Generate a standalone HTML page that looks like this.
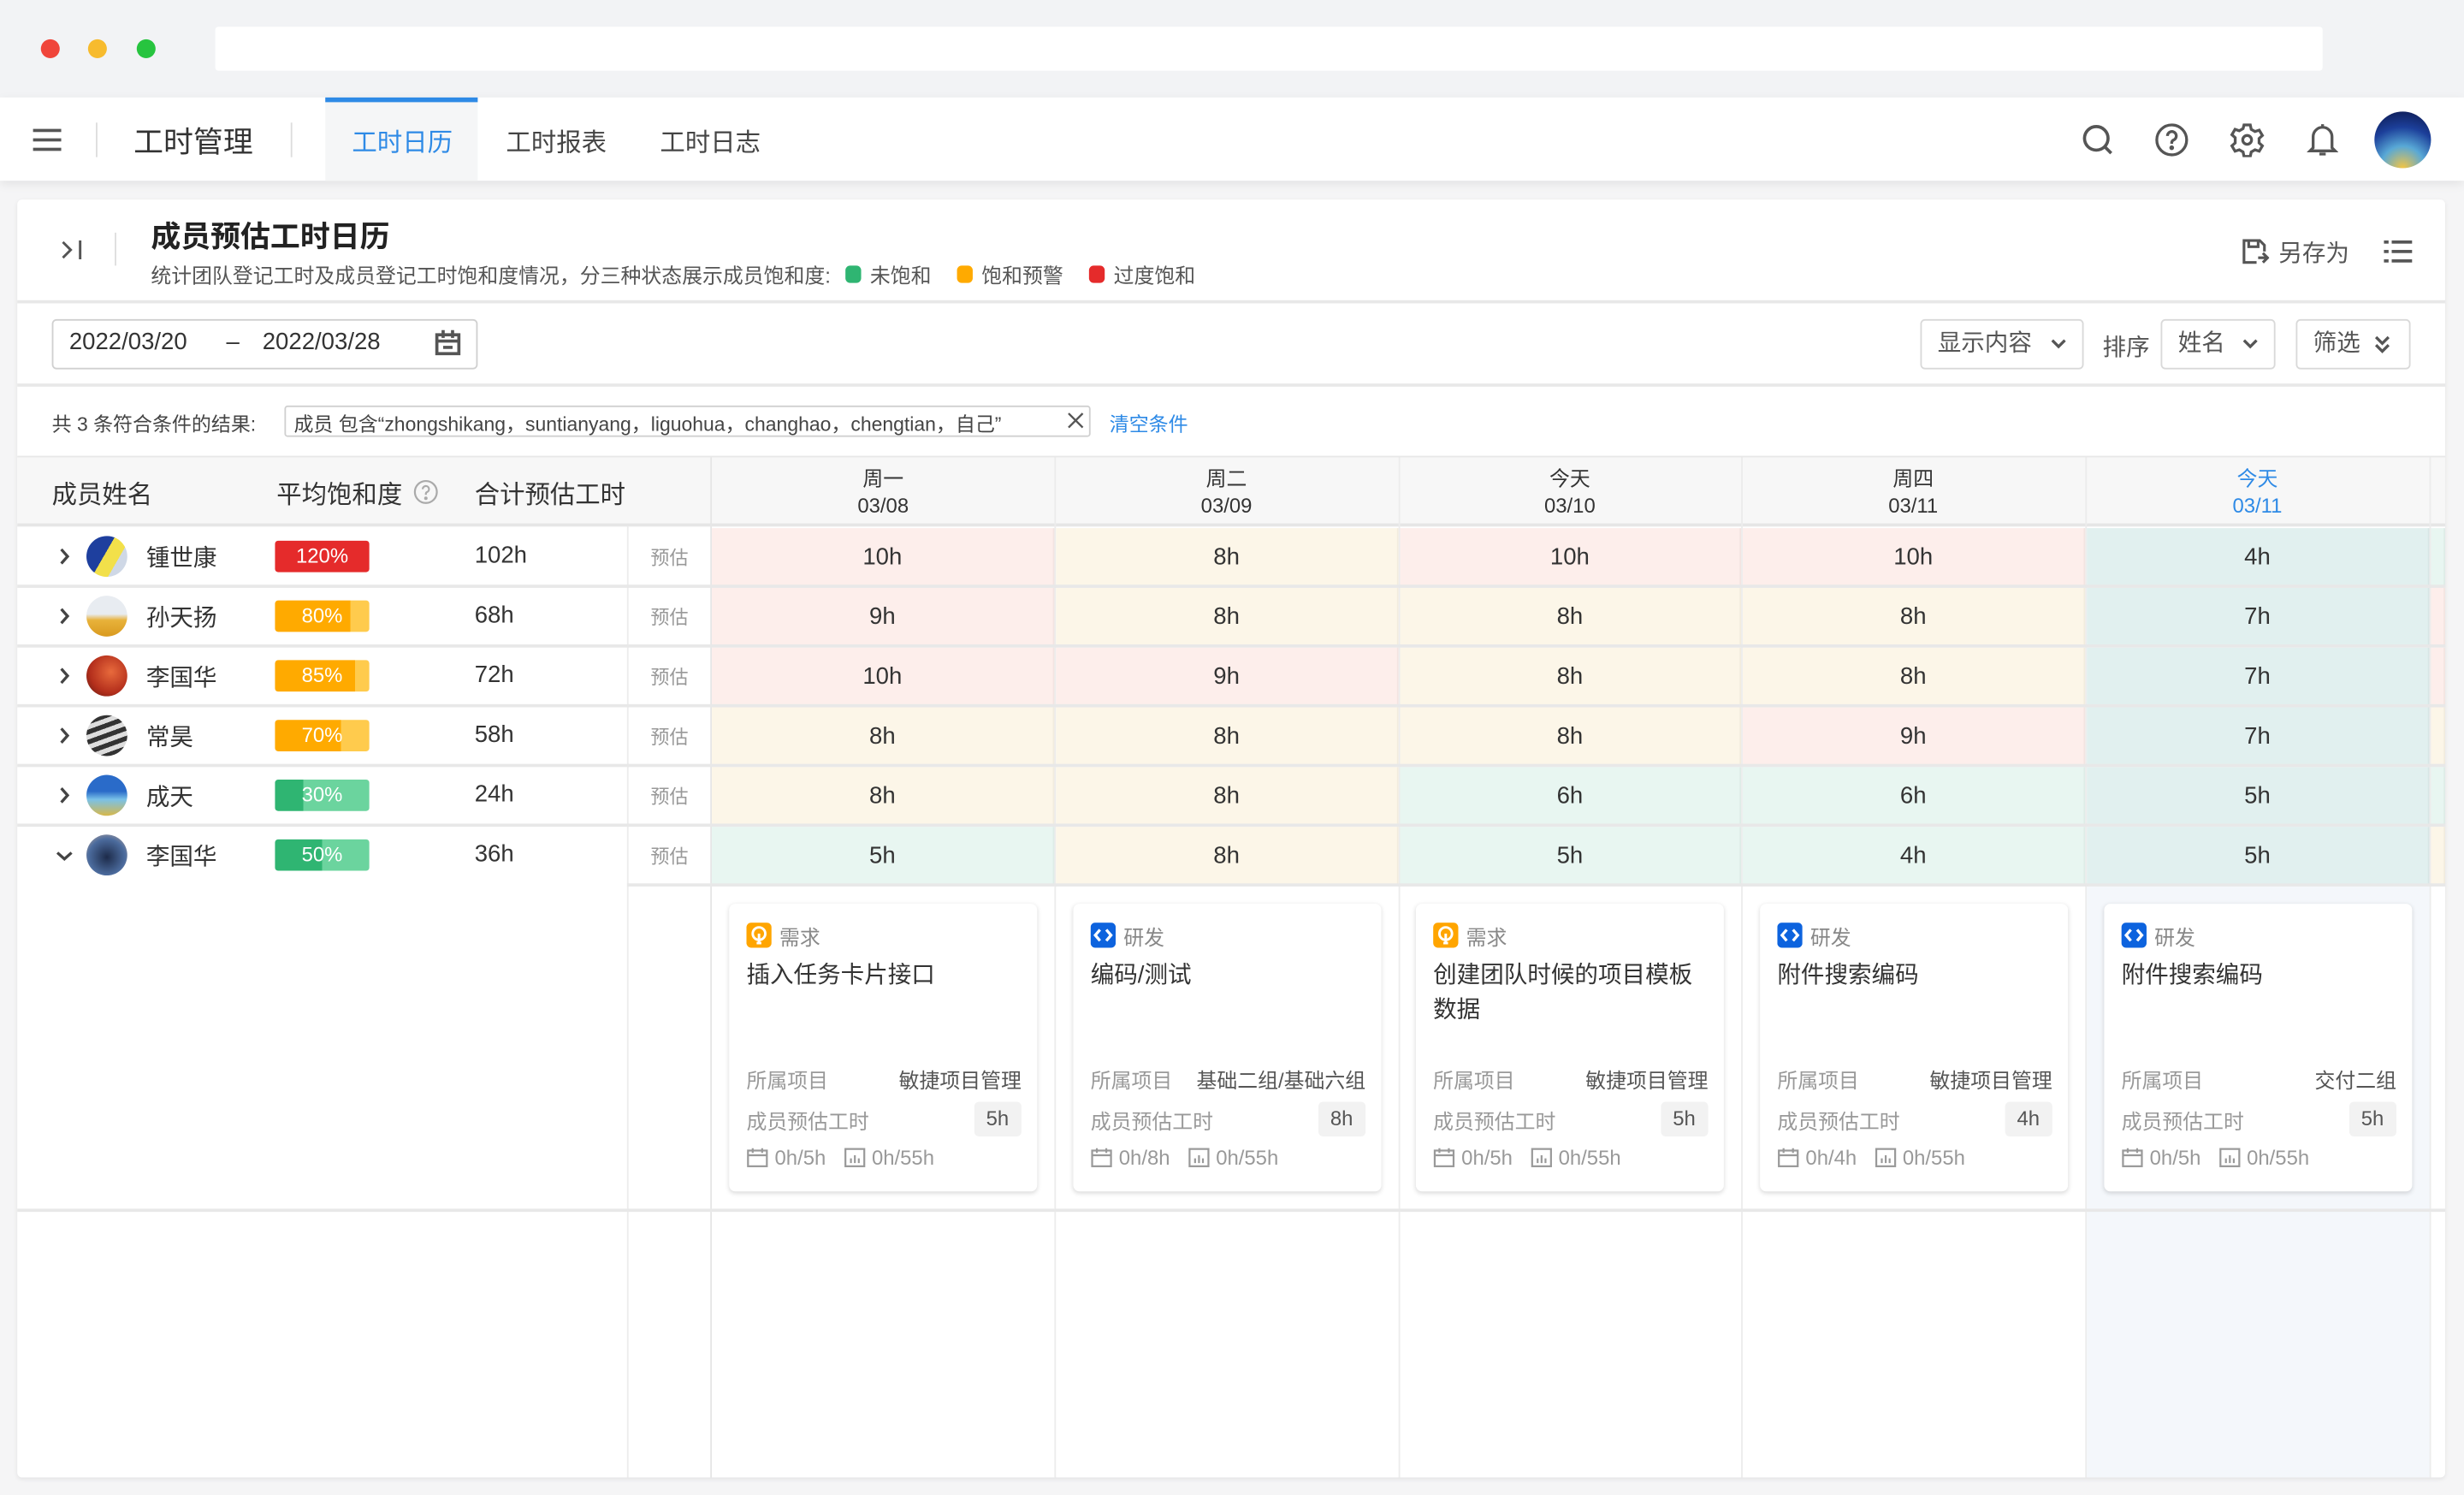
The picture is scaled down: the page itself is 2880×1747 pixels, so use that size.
<!DOCTYPE html>
<html><head><meta charset="utf-8">
<style>
*{margin:0;padding:0;box-sizing:border-box}
html,body{width:2880px;height:1746px;overflow:hidden;background:#f5f5f6}
body{font-family:"Liberation Sans","Noto Sans CJK SC",sans-serif;color:#333}
#w{position:absolute;left:0;top:0;width:1568px;height:951px;transform:scale(1.836735);transform-origin:0 0;background:#f5f5f6}
.a{position:absolute}
.t{position:absolute;white-space:nowrap}
.cell{position:absolute;height:37px;text-align:center;line-height:37px;font-size:15px;color:#333;border-right:1px solid rgba(0,0,0,0.04)}
.R{background:#fdeeeb}.Y{background:#fcf6e8}.G{background:#e8f6f1}.T{background:#e1f0ef}
.hl{position:absolute;height:2px;background:#e8e8e8}
.vl{position:absolute;width:1px;background:#ececec}
.badge{position:absolute;left:175px;width:60px;height:20px;border-radius:2px;color:#fff;font-size:13px;text-align:center;line-height:20px;overflow:hidden}
.av{position:absolute;left:55px;width:26px;height:26px;border-radius:50%}
.card{position:absolute;top:575px;width:196px;height:183px;background:#fff;border-radius:4px;box-shadow:0 1px 3px rgba(0,0,0,0.15)}
.card .ty{position:absolute;left:32px;top:11px;font-size:13px;color:#888}
.card .ti{position:absolute;left:11px;top:35px;width:172px;font-size:15px;line-height:22px;color:#333}
.card .l1{position:absolute;left:11px;top:102px;font-size:13px;color:#999}
.card .r1{position:absolute;right:10px;top:102px;font-size:13px;color:#555}
.card .l2{position:absolute;left:11px;top:128px;font-size:13px;color:#999}
.card .pill{position:absolute;right:10px;top:126px;height:22px;padding:0 8px;background:#f2f2f2;border-radius:3px;font-size:13px;line-height:22px;color:#555}
.card .st{position:absolute;left:11px;top:154px;font-size:13px;color:#999;display:flex;align-items:center;gap:4px;white-space:nowrap}
.ic{width:16px;height:16px;position:absolute;left:11px;top:12px;border-radius:3px}
.btn{position:absolute;top:203px;height:32px;border:1px solid #d9d9d9;border-radius:3px;font-size:15px;color:#555;line-height:30px;padding-left:10px}
.btn svg{position:absolute;top:11px}
.chev{position:absolute;left:37px}
</style></head><body><div id="w">

<div class="a" style="left:0;top:0;width:1568px;height:62px;background:#f2f3f5"></div>
<div class="a" style="left:26px;top:25px;width:12px;height:12px;border-radius:50%;background:#f0453a"></div>
<div class="a" style="left:56px;top:25px;width:12px;height:12px;border-radius:50%;background:#f7bb2e"></div>
<div class="a" style="left:87px;top:25px;width:12px;height:12px;border-radius:50%;background:#27c43f"></div>
<div class="a" style="left:137px;top:17px;width:1341px;height:28px;background:#fff;border-radius:2px"></div>

<div class="a" style="left:0;top:62px;width:1568px;height:53px;background:#fff;box-shadow:0 2px 6px rgba(0,0,0,0.08)"></div>
<svg class="a" style="left:21px;top:81px" width="18" height="16"><rect y="1" width="18" height="2" fill="#555"/><rect y="7" width="18" height="2" fill="#555"/><rect y="13" width="18" height="2" fill="#555"/></svg>
<div class="a" style="left:61px;top:78px;width:1px;height:22px;background:#ddd"></div>
<div class="t" style="left:85px;top:76px;font-size:19px;color:#333">工时管理</div>
<div class="a" style="left:185px;top:78px;width:1px;height:22px;background:#ddd"></div>
<div class="a" style="left:207px;top:62px;width:97px;height:53px;background:#f5f6f7;border-top:3px solid #2e8ae6"></div>
<div class="t" style="left:224px;top:77px;font-size:16px;color:#2e8ae6">工时日历</div>
<div class="t" style="left:322px;top:77px;font-size:16px;color:#444">工时报表</div>
<div class="t" style="left:420px;top:77px;font-size:16px;color:#444">工时日志</div>
<svg class="a" style="left:1324px;top:78px" width="22" height="22" fill="none" stroke="#555" stroke-width="2"><circle cx="10" cy="10" r="7.5"/><path d="M15.5 15.5l4 4"/></svg>
<svg class="a" style="left:1371px;top:78px" width="22" height="22" fill="none" stroke="#555" stroke-width="1.8"><circle cx="11" cy="11" r="9.5"/><path d="M8.3 8.5a2.8 2.8 0 1 1 3.8 2.6c-.8.4-1.1.9-1.1 1.8v.6"/><circle cx="11" cy="16" r=".6" fill="#555"/></svg>
<svg class="a" style="left:1419px;top:78px" width="22" height="22" fill="none" stroke="#555" stroke-width="1.8"><path d="M9 1.5h4l.6 2.8 2.4 1.4 2.7-.9 2 3.4-2.1 1.9v2.8l2.1 1.9-2 3.4-2.7-.9-2.4 1.4-.6 2.8H9l-.6-2.8-2.4-1.4-2.7.9-2-3.4 2.1-1.9V9.6L1.3 7.7l2-3.4 2.7.9 2.4-1.4z"/><circle cx="11" cy="11" r="2.8"/></svg>
<svg class="a" style="left:1468px;top:77px" width="20" height="24" fill="none" stroke="#555" stroke-width="1.8"><path d="M10 2v2M4 17V10a6 6 0 0 1 12 0v7l2 2H2z"/><path d="M8 21h4"/></svg>
<div class="a" style="left:1511px;top:71px;width:36px;height:36px;border-radius:50%;background:radial-gradient(circle at 50% 100%,#f5c542 0%,#58a8d6 35%,#1c3f9a 65%,#0b1546 100%)"></div>

<div class="a" style="left:11px;top:127px;width:1545px;height:813px;background:#fff;border-radius:3px;box-shadow:0 1px 3px rgba(0,0,0,0.08)"></div>
<svg class="a" style="left:38px;top:151px" width="16" height="16" fill="none" stroke="#555" stroke-width="1.6"><path d="M2 3l5 5-5 5M13 2v12"/></svg>
<div class="a" style="left:73px;top:148px;width:1px;height:21px;background:#ddd"></div>
<div class="t" style="left:96px;top:136px;font-size:19px;color:#222;font-weight:bold">成员预估工时日历</div>
<div class="t" style="left:96px;top:165px;font-size:13px;color:#555;display:flex;align-items:center">统计团队登记工时及成员登记工时饱和度情况，分三种状态展示成员饱和度:
<span style="display:inline-block;width:10px;height:11px;border-radius:3px;background:#2fb572;margin:0 6px 0 9px"></span>未饱和
<span style="display:inline-block;width:10px;height:11px;border-radius:3px;background:#ffaa00;margin:0 6px 0 16px"></span>饱和预警
<span style="display:inline-block;width:10px;height:11px;border-radius:3px;background:#e52b2b;margin:0 6px 0 16px"></span>过度饱和</div>
<svg class="a" style="left:1426px;top:151px" width="18" height="18" fill="none" stroke="#555" stroke-width="1.7"><path d="M10 16H2V2h10l3 3v4"/><path d="M5 2v4h6V2M11 13h6M14 10l3 3-3 3"/></svg>
<div class="t" style="left:1450px;top:150px;font-size:15px;color:#555">另存为</div>
<svg class="a" style="left:1517px;top:152px" width="18" height="16" fill="#555"><rect x="0" y="1" width="3" height="2"/><rect x="5" y="1" width="13" height="2"/><rect x="0" y="7" width="3" height="2"/><rect x="5" y="7" width="13" height="2"/><rect x="0" y="13" width="3" height="2"/><rect x="5" y="13" width="13" height="2"/></svg>
<div class="a" style="left:11px;top:191px;width:1545px;height:2px;background:#e8e8e8"></div>

<div class="a" style="left:33px;top:203px;width:271px;height:32px;border:1px solid #d0d0d0;border-radius:3px"></div>
<div class="t" style="left:44px;top:209px;font-size:15px;color:#333">2022/03/20</div>
<div class="t" style="left:144px;top:209px;font-size:15px;color:#333">–</div>
<div class="t" style="left:167px;top:209px;font-size:15px;color:#333">2022/03/28</div>
<svg class="a" style="left:276px;top:209px" width="18" height="18" fill="none" stroke="#555" stroke-width="2"><rect x="2" y="4" width="14" height="12"/><path d="M6 1v5M12 1v5M2 8h14M6 12h6"/></svg>
<div class="btn" style="left:1222px;width:104px">显示内容<svg style="left:82px" width="10" height="8" fill="none" stroke="#555" stroke-width="1.8"><path d="M1 1.5l4 4 4-4"/></svg></div>
<div class="t" style="left:1338px;top:210px;font-size:15px;color:#555">排序</div>
<div class="btn" style="left:1375px;width:73px">姓名<svg style="left:51px" width="10" height="8" fill="none" stroke="#555" stroke-width="1.8"><path d="M1 1.5l4 4 4-4"/></svg></div>
<div class="btn" style="left:1461px;width:73px">筛选<svg style="left:49px;top:9px" width="10" height="12" fill="none" stroke="#555" stroke-width="1.8"><path d="M1 1.5l4 4 4-4M1 6.5l4 4 4-4"/></svg></div>
<div class="a" style="left:11px;top:244px;width:1545px;height:2px;background:#e8e8e8"></div>

<div class="t" style="left:33px;top:259px;font-size:12.5px;color:#444">共 3 条符合条件的结果:</div>
<div class="a" style="left:181px;top:258px;width:513px;height:20px;border:1px solid #d0d0d0;border-radius:2px"></div>
<div class="t" style="left:187px;top:259px;font-size:12.5px;color:#444">成员 包含“zhongshikang，suntianyang，liguohua，changhao，chengtian，自己”</div>
<svg class="a" style="left:679px;top:262px" width="11" height="11" fill="none" stroke="#555" stroke-width="1.3"><path d="M1 1l9 9M10 1l-9 9"/></svg>
<div class="t" style="left:706px;top:259px;font-size:12.5px;color:#2e8ae6">清空条件</div>

<div class="a" style="left:11px;top:290px;width:1545px;height:45px;background:#f7f7f7;border-top:1px solid #e8e8e8;border-bottom:2px solid #e6e6e6"></div>
<div class="t" style="left:33px;top:301px;font-size:16px;color:#333">成员姓名</div>
<div class="t" style="left:176px;top:301px;font-size:16px;color:#333">平均饱和度</div>
<svg class="a" style="left:263px;top:305px" width="16" height="16" fill="none" stroke="#aaa" stroke-width="1.2"><circle cx="8" cy="8" r="7"/><path d="M6 6.2a2 2 0 1 1 2.7 1.9c-.5.2-.7.6-.7 1.2v.5"/><circle cx="8" cy="12" r=".5" fill="#aaa"/></svg>
<div class="t" style="left:302px;top:301px;font-size:16px;color:#333">合计预估工时</div>
<div class="vl" style="left:452px;top:291px;height:649px;background:#e6e6e6"></div>
<div class="vl" style="left:671px;top:291px;height:649px"></div>
<div class="vl" style="left:890px;top:291px;height:649px"></div>
<div class="vl" style="left:1108px;top:291px;height:649px"></div>
<div class="vl" style="left:1327px;top:291px;height:649px"></div>
<div class="vl" style="left:1546px;top:291px;height:649px"></div>
<div class="vl" style="left:399px;top:335px;height:605px"></div>
<div class="t" style="left:453px;width:218px;top:296px;text-align:center;font-size:13px;line-height:17px;color:#333">周一<br>03/08</div>
<div class="t" style="left:671px;width:219px;top:296px;text-align:center;font-size:13px;line-height:17px;color:#333">周二<br>03/09</div>
<div class="t" style="left:890px;width:218px;top:296px;text-align:center;font-size:13px;line-height:17px;color:#333">今天<br>03/10</div>
<div class="t" style="left:1108px;width:219px;top:296px;text-align:center;font-size:13px;line-height:17px;color:#333">周四<br>03/11</div>
<div class="t" style="left:1327px;width:219px;top:296px;text-align:center;font-size:13px;line-height:17px;color:#2e8ae6">今天<br>03/11</div>

<div class="a" style="left:1328px;top:564px;width:218px;height:376px;background:#f4f7fb"></div>

<div class="cell R" style="left:453px;top:336px;width:218px">10h</div>
<div class="cell Y" style="left:672px;top:336px;width:218px">8h</div>
<div class="cell R" style="left:891px;top:336px;width:217px">10h</div>
<div class="cell R" style="left:1109px;top:336px;width:218px">10h</div>
<div class="cell T" style="left:1328px;top:336px;width:218px">4h</div>
<div class="cell G" style="left:1547px;top:336px;width:9px"></div>
<div class="cell R" style="left:453px;top:374px;width:218px">9h</div>
<div class="cell Y" style="left:672px;top:374px;width:218px">8h</div>
<div class="cell Y" style="left:891px;top:374px;width:217px">8h</div>
<div class="cell Y" style="left:1109px;top:374px;width:218px">8h</div>
<div class="cell T" style="left:1328px;top:374px;width:218px">7h</div>
<div class="cell R" style="left:1547px;top:374px;width:9px"></div>
<div class="cell R" style="left:453px;top:412px;width:218px">10h</div>
<div class="cell R" style="left:672px;top:412px;width:218px">9h</div>
<div class="cell Y" style="left:891px;top:412px;width:217px">8h</div>
<div class="cell Y" style="left:1109px;top:412px;width:218px">8h</div>
<div class="cell T" style="left:1328px;top:412px;width:218px">7h</div>
<div class="cell R" style="left:1547px;top:412px;width:9px"></div>
<div class="cell Y" style="left:453px;top:450px;width:218px">8h</div>
<div class="cell Y" style="left:672px;top:450px;width:218px">8h</div>
<div class="cell Y" style="left:891px;top:450px;width:217px">8h</div>
<div class="cell R" style="left:1109px;top:450px;width:218px">9h</div>
<div class="cell T" style="left:1328px;top:450px;width:218px">7h</div>
<div class="cell Y" style="left:1547px;top:450px;width:9px"></div>
<div class="cell Y" style="left:453px;top:488px;width:218px">8h</div>
<div class="cell Y" style="left:672px;top:488px;width:218px">8h</div>
<div class="cell G" style="left:891px;top:488px;width:217px">6h</div>
<div class="cell G" style="left:1109px;top:488px;width:218px">6h</div>
<div class="cell T" style="left:1328px;top:488px;width:218px">5h</div>
<div class="cell G" style="left:1547px;top:488px;width:9px"></div>
<div class="cell G" style="left:453px;top:526px;width:218px">5h</div>
<div class="cell Y" style="left:672px;top:526px;width:218px">8h</div>
<div class="cell G" style="left:891px;top:526px;width:217px">5h</div>
<div class="cell G" style="left:1109px;top:526px;width:218px">4h</div>
<div class="cell T" style="left:1328px;top:526px;width:218px">5h</div>
<div class="cell Y" style="left:1547px;top:526px;width:9px"></div>

<div class="hl" style="left:11px;top:372px;width:1545px"></div>
<div class="hl" style="left:11px;top:410px;width:1545px"></div>
<div class="hl" style="left:11px;top:448px;width:1545px"></div>
<div class="hl" style="left:11px;top:486px;width:1545px"></div>
<div class="hl" style="left:11px;top:524px;width:1545px"></div>
<div class="hl" style="left:399px;top:562px;width:1157px"></div>
<div class="hl" style="left:11px;top:769px;width:1545px"></div>

<svg class="chev" style="top:348px" width="8" height="12" fill="none" stroke="#444" stroke-width="1.8"><path d="M2 1.5l4 4.5-4 4.5"/></svg>
<svg class="chev" style="top:386px" width="8" height="12" fill="none" stroke="#444" stroke-width="1.8"><path d="M2 1.5l4 4.5-4 4.5"/></svg>
<svg class="chev" style="top:424px" width="8" height="12" fill="none" stroke="#444" stroke-width="1.8"><path d="M2 1.5l4 4.5-4 4.5"/></svg>
<svg class="chev" style="top:462px" width="8" height="12" fill="none" stroke="#444" stroke-width="1.8"><path d="M2 1.5l4 4.5-4 4.5"/></svg>
<svg class="chev" style="top:500px" width="8" height="12" fill="none" stroke="#444" stroke-width="1.8"><path d="M2 1.5l4 4.5-4 4.5"/></svg>
<svg class="a" style="left:35px;top:541px" width="12" height="8" fill="none" stroke="#444" stroke-width="1.8"><path d="M1.5 1.5l4.5 4 4.5-4"/></svg>

<div class="av" style="top:341px;background:linear-gradient(120deg,#1e3f9e 0 45%,#f2e04a 45% 70%,#cfd8e6 70%)"></div>
<div class="av" style="top:379px;background:linear-gradient(180deg,#e8ecf1 0 45%,#e8b23a 60%,#d99a20)"></div>
<div class="av" style="top:417px;background:radial-gradient(circle at 60% 40%,#e86a3c,#b42f1c 60%,#5c1a12)"></div>
<div class="av" style="top:455px;background:repeating-linear-gradient(160deg,#ddd 0 3px,#333 3px 6px)"></div>
<div class="av" style="top:493px;background:linear-gradient(180deg,#2a6bc9 0 40%,#79c1e8 60%,#d7b84a)"></div>
<div class="av" style="top:531px;background:radial-gradient(circle at 50% 55%,#1d2b4a,#4c6c9e 60%,#c9b0a0)"></div>

<div class="t" style="left:93px;top:344px;font-size:15px;color:#333">锺世康</div>
<div class="t" style="left:93px;top:382px;font-size:15px;color:#333">孙天扬</div>
<div class="t" style="left:93px;top:420px;font-size:15px;color:#333">李国华</div>
<div class="t" style="left:93px;top:458px;font-size:15px;color:#333">常昊</div>
<div class="t" style="left:93px;top:496px;font-size:15px;color:#333">成天</div>
<div class="t" style="left:93px;top:534px;font-size:15px;color:#333">李国华</div>

<div class="badge" style="top:344px;background:#e52b2b">120%</div>
<div class="badge" style="top:382px;background:linear-gradient(90deg,#ffaa00 0 80%,#ffcb4d 80%)">80%</div>
<div class="badge" style="top:420px;background:linear-gradient(90deg,#ffaa00 0 85%,#ffcb4d 85%)">85%</div>
<div class="badge" style="top:458px;background:linear-gradient(90deg,#ffaa00 0 70%,#ffcb4d 70%)">70%</div>
<div class="badge" style="top:496px;background:linear-gradient(90deg,#2fb572 0 30%,#6bd49e 30%)">30%</div>
<div class="badge" style="top:534px;background:linear-gradient(90deg,#2fb572 0 50%,#6bd49e 50%)">50%</div>

<div class="t" style="left:302px;top:345px;font-size:15px;color:#333">102h</div>
<div class="t" style="left:302px;top:383px;font-size:15px;color:#333">68h</div>
<div class="t" style="left:302px;top:421px;font-size:15px;color:#333">72h</div>
<div class="t" style="left:302px;top:459px;font-size:15px;color:#333">58h</div>
<div class="t" style="left:302px;top:497px;font-size:15px;color:#333">24h</div>
<div class="t" style="left:302px;top:535px;font-size:15px;color:#333">36h</div>

<div class="t" style="left:414px;top:346px;font-size:12px;color:#999">预估</div>
<div class="t" style="left:414px;top:384px;font-size:12px;color:#999">预估</div>
<div class="t" style="left:414px;top:422px;font-size:12px;color:#999">预估</div>
<div class="t" style="left:414px;top:460px;font-size:12px;color:#999">预估</div>
<div class="t" style="left:414px;top:498px;font-size:12px;color:#999">预估</div>
<div class="t" style="left:414px;top:536px;font-size:12px;color:#999">预估</div>

<div class="card" style="left:464px">
 <svg class="ic" viewBox="0 0 16 16"><rect width="16" height="16" rx="3" fill="#ffa500"/><circle cx="8" cy="7" r="4" fill="none" stroke="#fff" stroke-width="1.6"/><path d="M8 7v6M6.5 13h3" stroke="#fff" stroke-width="1.6"/></svg>
 <div class="ty">需求</div><div class="ti">插入任务卡片接口</div>
 <div class="l1">所属项目</div><div class="r1">敏捷项目管理</div>
 <div class="l2">成员预估工时</div><div class="pill">5h</div>
 <div class="st"><svg width="14" height="13" fill="none" stroke="#999" stroke-width="1.2"><rect x="1" y="2" width="12" height="10"/><path d="M1 5h12M4 0.5v3M10 0.5v3"/></svg>0h/5h&nbsp;&nbsp;<svg width="14" height="13" fill="none" stroke="#999" stroke-width="1.2"><rect x="1" y="1" width="12" height="11"/><path d="M4.5 10V7M7 10V5M9.5 10V7"/></svg>0h/55h</div>
</div>
<div class="card" style="left:683px">
 <svg class="ic" viewBox="0 0 16 16"><rect width="16" height="16" rx="2" fill="#0d63de"/><path d="M6 4.5L3 8l3 3.5M10 4.5L13 8l-3 3.5" fill="none" stroke="#fff" stroke-width="1.8"/></svg>
 <div class="ty">研发</div><div class="ti">编码/测试</div>
 <div class="l1">所属项目</div><div class="r1">基础二组/基础六组</div>
 <div class="l2">成员预估工时</div><div class="pill">8h</div>
 <div class="st"><svg width="14" height="13" fill="none" stroke="#999" stroke-width="1.2"><rect x="1" y="2" width="12" height="10"/><path d="M1 5h12M4 0.5v3M10 0.5v3"/></svg>0h/8h&nbsp;&nbsp;<svg width="14" height="13" fill="none" stroke="#999" stroke-width="1.2"><rect x="1" y="1" width="12" height="11"/><path d="M4.5 10V7M7 10V5M9.5 10V7"/></svg>0h/55h</div>
</div>
<div class="card" style="left:901px">
 <svg class="ic" viewBox="0 0 16 16"><rect width="16" height="16" rx="3" fill="#ffa500"/><circle cx="8" cy="7" r="4" fill="none" stroke="#fff" stroke-width="1.6"/><path d="M8 7v6M6.5 13h3" stroke="#fff" stroke-width="1.6"/></svg>
 <div class="ty">需求</div><div class="ti">创建团队时候的项目模板<br>数据</div>
 <div class="l1">所属项目</div><div class="r1">敏捷项目管理</div>
 <div class="l2">成员预估工时</div><div class="pill">5h</div>
 <div class="st"><svg width="14" height="13" fill="none" stroke="#999" stroke-width="1.2"><rect x="1" y="2" width="12" height="10"/><path d="M1 5h12M4 0.5v3M10 0.5v3"/></svg>0h/5h&nbsp;&nbsp;<svg width="14" height="13" fill="none" stroke="#999" stroke-width="1.2"><rect x="1" y="1" width="12" height="11"/><path d="M4.5 10V7M7 10V5M9.5 10V7"/></svg>0h/55h</div>
</div>
<div class="card" style="left:1120px">
 <svg class="ic" viewBox="0 0 16 16"><rect width="16" height="16" rx="2" fill="#0d63de"/><path d="M6 4.5L3 8l3 3.5M10 4.5L13 8l-3 3.5" fill="none" stroke="#fff" stroke-width="1.8"/></svg>
 <div class="ty">研发</div><div class="ti">附件搜索编码</div>
 <div class="l1">所属项目</div><div class="r1">敏捷项目管理</div>
 <div class="l2">成员预估工时</div><div class="pill">4h</div>
 <div class="st"><svg width="14" height="13" fill="none" stroke="#999" stroke-width="1.2"><rect x="1" y="2" width="12" height="10"/><path d="M1 5h12M4 0.5v3M10 0.5v3"/></svg>0h/4h&nbsp;&nbsp;<svg width="14" height="13" fill="none" stroke="#999" stroke-width="1.2"><rect x="1" y="1" width="12" height="11"/><path d="M4.5 10V7M7 10V5M9.5 10V7"/></svg>0h/55h</div>
</div>
<div class="card" style="left:1339px">
 <svg class="ic" viewBox="0 0 16 16"><rect width="16" height="16" rx="2" fill="#0d63de"/><path d="M6 4.5L3 8l3 3.5M10 4.5L13 8l-3 3.5" fill="none" stroke="#fff" stroke-width="1.8"/></svg>
 <div class="ty">研发</div><div class="ti">附件搜索编码</div>
 <div class="l1">所属项目</div><div class="r1">交付二组</div>
 <div class="l2">成员预估工时</div><div class="pill">5h</div>
 <div class="st"><svg width="14" height="13" fill="none" stroke="#999" stroke-width="1.2"><rect x="1" y="2" width="12" height="10"/><path d="M1 5h12M4 0.5v3M10 0.5v3"/></svg>0h/5h&nbsp;&nbsp;<svg width="14" height="13" fill="none" stroke="#999" stroke-width="1.2"><rect x="1" y="1" width="12" height="11"/><path d="M4.5 10V7M7 10V5M9.5 10V7"/></svg>0h/55h</div>
</div>

</div></body></html>
